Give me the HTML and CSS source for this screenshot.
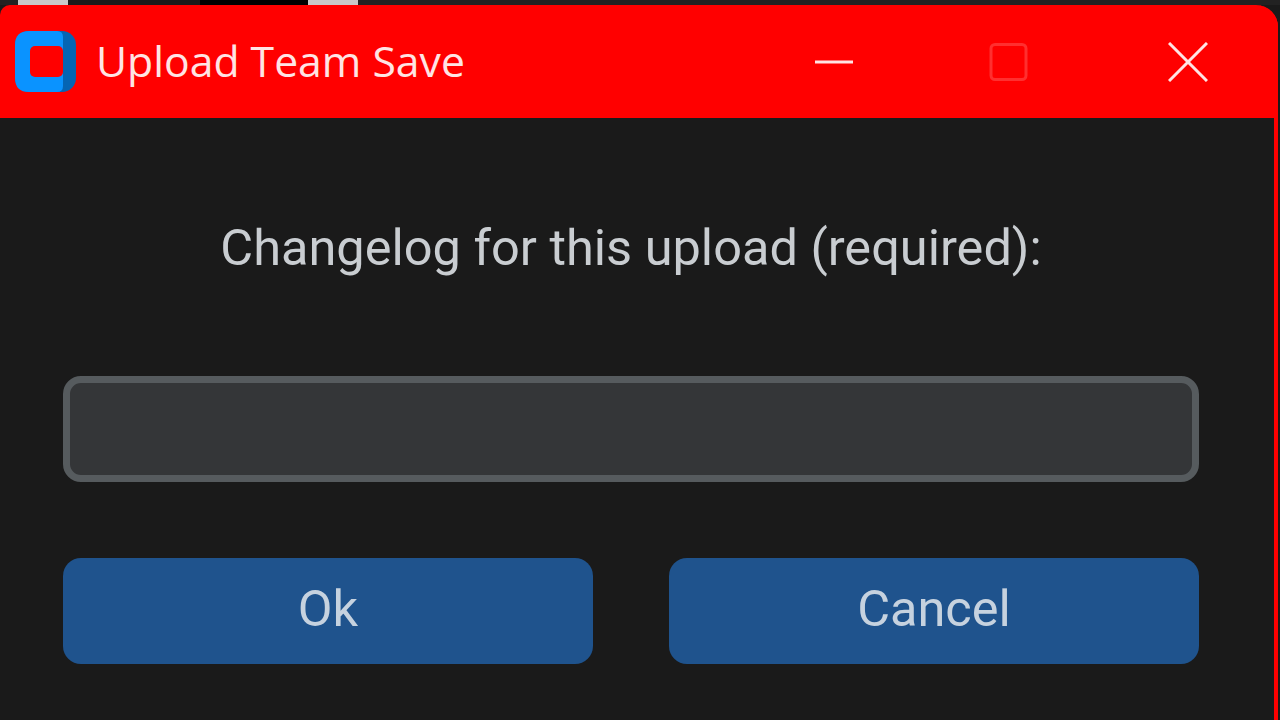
FILE: index.html
```html
<!DOCTYPE html>
<html lang="en">
<head>
  <meta charset="UTF-8" />
  <title>Upload Team Save</title>
  <link rel="stylesheet" href="styles.css">
</head>
<body>
  <div class="behind">
    <div class="behind-tab"></div>
    <div class="behind-black"></div>
    <div class="behind-tab"></div>
  </div>

  <div class="window">
    <div class="titlebar">
      <svg class="app-icon" viewBox="0 0 61 61">
        <rect fill="#0565b4" width="61" height="61" rx="14"/>
        <path fill="#0a93ff" d="M14 0H42Q48 0 48 6V55Q48 61 42 61H14Q0 61 0 47V14Q0 0 14 0Z"/>
        <rect fill="#f00" x="15" y="15" width="33" height="31" rx="5"/>
      </svg>
      <div class="title">Upload Team Save</div>
      <div class="controls">
        <svg class="ctrl ctrl-min" viewBox="0 0 40 40"><path d="M1 20H39" /></svg>
        <svg class="ctrl ctrl-max" viewBox="0 0 40 40"><rect x="3" y="2.5" width="35" height="35" rx="4" /></svg>
        <svg class="ctrl ctrl-close" viewBox="0 0 40 40"><path d="M1 1L39 39M39 1L1 39" /></svg>
      </div>
    </div>

    <div class="content">
      <div class="prompt">Changelog for this upload (required):</div>
      <input class="entry" type="text">
      <div class="buttons">
        <button class="btn">Ok</button>
        <button class="btn">Cancel</button>
      </div>
    </div>
  </div>
</body>
</html>
```

FILE: styles.css
```css
* {
  box-sizing: border-box;
}

html, body {
  height: 100%;
}

body {
  margin: 0;
  overflow: hidden;
  background: #1a1a1a;
  font-family: Roboto, sans-serif;
  display: flex;
  flex-direction: column;
}

.behind {
  height: 5px;
  flex: none;
  display: flex;
  padding-left: 18px;
  background: #222;
}

.behind-tab {
  width: 50px;
  background: #c9c9c9;
}

.behind-black {
  width: 240px;
  background: linear-gradient(to right, #1a1a1a 55%, #000 55%);
}

.window {
  flex: 1;
  margin-right: 2px;
  border-right: 4px solid #f00;
  border-top-right-radius: 22px;
  background: #1a1a1a;
  display: flex;
  flex-direction: column;
}

.titlebar {
  height: 113px;
  flex: none;
  margin-right: -4px;
  background: #f00;
  border-radius: 10px 22px 0 0;
  display: flex;
  align-items: center;
  padding-left: 15px;
}

.app-icon {
  width: 61px;
  height: 61px;
  flex: none;
}

.title {
  margin-left: 20px;
  margin-top: -2px;
  font-family: "Open Sans", sans-serif;
  font-size: 42.7px;
  color: #ffe4e4;
}

.controls {
  margin-left: auto;
  display: flex;
  gap: 140px;
  padding-right: 70px;
}

.ctrl {
  width: 40px;
  height: 40px;
  fill: none;
  stroke: #ffe4e4;
  stroke-width: 3;
}

.ctrl-min {
  margin-right: -6px;
}

.ctrl-max {
  stroke: #ff2f2f;
}

.content {
  flex: 1;
  padding: 0 75px 0 63px;
  display: flex;
  flex-direction: column;
}

.prompt {
  margin-top: 100px;
  height: 60px;
  line-height: 60px;
  text-align: center;
  font-size: 50.5px;
  color: #c9cdd1;
}

.entry {
  display: block;
  width: 100%;
  height: 106px;
  margin-top: 98px;
  background: #343638;
  border: 7px solid #565b5e;
  border-radius: 18px;
}

.buttons {
  margin-top: 76px;
  display: grid;
  grid-template-columns: 1fr 1fr;
  gap: 76px;
}

.btn {
  height: 106px;
  padding: 0 0 6px;
  border: none;
  border-radius: 18px;
  background: #1f538d;
  color: #c6d2df;
  font-family: Roboto, sans-serif;
  font-size: 50.5px;
}
```
